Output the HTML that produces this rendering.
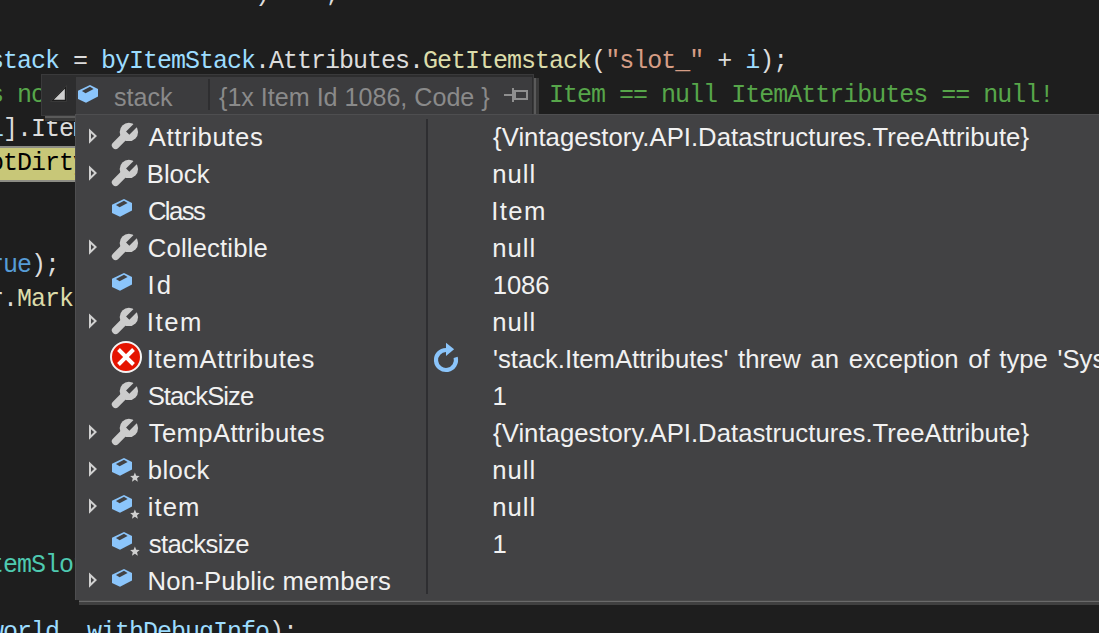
<!DOCTYPE html>
<html><head><meta charset="utf-8">
<style>
html,body{margin:0;padding:0;}
body{width:1099px;height:633px;overflow:hidden;position:relative;background:#1e1e1e;}
.code{position:absolute;left:-11px;height:34px;line-height:34px;font-family:"Liberation Mono",monospace;font-size:25px;letter-spacing:-1px;white-space:pre;color:#dcdcdc;}
.v{color:#9cdcfe}.m{color:#dcdcaa}.s{color:#d69d85}.k{color:#569cd6}.t{color:#4ec9b0}.c{color:#57a64a}
#hl{position:absolute;left:0;top:146px;width:75px;height:32px;background:#c8c778;border-top:2px solid #8c8c84;border-bottom:2px solid #8c8c84;}
#hdr{position:absolute;left:41px;top:74px;width:491px;height:40px;background:#2d2d2e;border:1px solid #3a3a3b;}
#hdrin{position:absolute;left:76px;top:77px;width:456px;height:37px;background:#3c3c3e;}
.ui{font-family:"Liberation Sans",sans-serif;font-size:25.7px;white-space:pre;}
#panel{position:absolute;left:75px;top:114px;width:1030px;height:485px;background:#424244;border-left:1px solid #4e4e50;border-top:1px solid #4e4e50;}
.row{position:absolute;left:0;height:37px;width:1030px;}
.row .nm{position:absolute;left:73px;top:1px;line-height:37px;color:#f1f1f1;}
.row .vl{position:absolute;left:417px;top:1px;line-height:37px;color:#f1f1f1;}
.row svg{position:absolute;}
</style></head>
<body>
<!-- code -->
<div class="code" style="top:-22px">                   )    ;</div>
<div class="code" style="top:45px"><span class="v">stack</span> = <span class="v">byItemStack</span>.Attributes.<span class="m">GetItemstack</span>(<span class="s">"slot_"</span> + <span class="v">i</span>);</div>
<div class="code c" style="top:79px">s not                                   Item == null ItemAttributes == null!</div>
<div class="code" style="top:113px"><span class="v">i</span>].Item</div>
<div id="hl"></div>
<div class="code" style="top:147px;color:#000">otDirty</div>
<div class="code" style="top:249px"><span class="k">rue</span>);</div>
<div class="code" style="top:283px">r.<span class="m">Mark</span></div>
<div class="code t" style="top:549px">temSlot</div>
<div class="code" style="top:616px"><span class="v">world</span>, <span class="v">withDebugInfo</span>);</div>

<!-- header -->
<div id="hdr"></div>
<div style="position:absolute;left:45px;top:116px;width:30px;height:2px;background:#5a5a5a"></div>
<div style="position:absolute;left:45px;top:118px;width:30px;height:3px;background:#3a3a3a"></div>
<div style="position:absolute;left:534px;top:78px;width:2px;height:36px;background:#5a5a5a"></div>
<div style="position:absolute;left:536px;top:78px;width:3px;height:36px;background:#3a3a3a"></div>
<svg style="position:absolute;left:48px;top:84px" width="20" height="20" viewBox="0 0 20 20">
  <polygon points="2.3,17.5 18.5,1.3 18.5,17.5" fill="#1e1e1e" stroke="#383838" stroke-width="1"/>
  <polygon points="5.8,15.8 16.8,4.8 16.8,15.8" fill="#cfcfcf"/>
</svg>
<div id="hdrin"></div>
<svg style="position:absolute;left:78px;top:85px" width="21" height="19" viewBox="0 0 21 19">
  <polygon points="12,0 20,4 20,11.6 8,17.8 0,14 0,5.7" fill="#8bc5fb"/>
  <polygon points="3.9,5.9 12,1.7 15.6,4.0 7.6,8.2" fill="#3c3c3e"/>
</svg>
<div class="ui" style="position:absolute;left:114px;top:79px;line-height:37px;font-size:25.1px;color:#8a8a8a">stack</div>
<div style="position:absolute;left:208px;top:79px;width:2px;height:31px;background:#2e2e30"></div>
<div class="ui" style="position:absolute;left:219px;top:79px;line-height:37px;font-size:25.1px;color:#8a8a8a">{1x Item Id 1086, Code }</div>
<svg style="position:absolute;left:503px;top:87px" width="27" height="16" viewBox="0 0 27 16">
  <rect x="1" y="7" width="9" height="2" fill="#8f8f8f"/>
  <rect x="9" y="1" width="2" height="14" fill="#8f8f8f"/>
  <rect x="12" y="4" width="12" height="8" fill="none" stroke="#8f8f8f" stroke-width="2"/>
</svg>

<!-- panel -->
<div id="panel">
  <div style="position:absolute;left:350px;top:4px;width:2px;height:475px;background:#2e2e31"></div>
</div>
<div style="position:absolute;left:79px;top:600px;width:1020px;height:1px;background:#4a4a4a"></div>
<div style="position:absolute;left:79px;top:601px;width:1020px;height:1px;background:#6a6a6a"></div>
<div style="position:absolute;left:79px;top:602px;width:1020px;height:3px;background:#404040"></div>

<div id="rows" style="position:absolute;left:76px;top:118px;">
<div class="row" style="top:0px"><svg style="left:12px;top:9px" width="12" height="19" viewBox="0 0 12 19"><path d="M1,1.5 L9,9.1 L1,16.7 Z M3,6.16 L3,12.04 L6.1,9.1 Z" fill="#d0d0d0" fill-rule="evenodd"/></svg><svg style="left:35px;top:4px" width="28" height="28" viewBox="0 0 28 28"><defs><mask id="wm0" maskUnits="userSpaceOnUse" x="0" y="0" width="28" height="28"><rect width="28" height="28" fill="#fff"/><line x1="16.7" y1="11.1" x2="30" y2="-2.2" stroke="#000" stroke-width="4.6"/></mask></defs><g mask="url(#wm0)" fill="#cccccc"><circle cx="17.9" cy="9.9" r="9.2"/><line x1="17.9" y1="9.9" x2="4.6" y2="23.3" stroke="#cccccc" stroke-width="7.5" stroke-linecap="round"/></g></svg><div class="ui nm" style="left:72.80px;letter-spacing:0.61px">Attributes</div><div class="ui vl" style="left:417.10px;letter-spacing:0.02px">{Vintagestory.API.Datastructures.TreeAttribute}</div></div>
<div class="row" style="top:37px"><svg style="left:12px;top:9px" width="12" height="19" viewBox="0 0 12 19"><path d="M1,1.5 L9,9.1 L1,16.7 Z M3,6.16 L3,12.04 L6.1,9.1 Z" fill="#d0d0d0" fill-rule="evenodd"/></svg><svg style="left:35px;top:4px" width="28" height="28" viewBox="0 0 28 28"><defs><mask id="wm1" maskUnits="userSpaceOnUse" x="0" y="0" width="28" height="28"><rect width="28" height="28" fill="#fff"/><line x1="16.7" y1="11.1" x2="30" y2="-2.2" stroke="#000" stroke-width="4.6"/></mask></defs><g mask="url(#wm1)" fill="#cccccc"><circle cx="17.9" cy="9.9" r="9.2"/><line x1="17.9" y1="9.9" x2="4.6" y2="23.3" stroke="#cccccc" stroke-width="7.5" stroke-linecap="round"/></g></svg><div class="ui nm" style="left:70.80px;letter-spacing:-0.03px">Block</div><div class="ui vl" style="left:416.20px;letter-spacing:1.00px">null</div></div>
<div class="row" style="top:74px"><svg style="left:36px;top:7px" width="21" height="19" viewBox="0 0 21 19"><polygon points="12,0 20,4 20,11.6 8,17.8 0,14 0,5.7" fill="#8bc5fb"/><polygon points="3.9,5.9 12,1.7 15.6,4.0 7.6,8.2" fill="#424244"/></svg><div class="ui nm" style="left:71.90px;letter-spacing:-1.60px">Class</div><div class="ui vl" style="left:415.20px;letter-spacing:1.43px">Item</div></div>
<div class="row" style="top:111px"><svg style="left:12px;top:9px" width="12" height="19" viewBox="0 0 12 19"><path d="M1,1.5 L9,9.1 L1,16.7 Z M3,6.16 L3,12.04 L6.1,9.1 Z" fill="#d0d0d0" fill-rule="evenodd"/></svg><svg style="left:35px;top:4px" width="28" height="28" viewBox="0 0 28 28"><defs><mask id="wm3" maskUnits="userSpaceOnUse" x="0" y="0" width="28" height="28"><rect width="28" height="28" fill="#fff"/><line x1="16.7" y1="11.1" x2="30" y2="-2.2" stroke="#000" stroke-width="4.6"/></mask></defs><g mask="url(#wm3)" fill="#cccccc"><circle cx="17.9" cy="9.9" r="9.2"/><line x1="17.9" y1="9.9" x2="4.6" y2="23.3" stroke="#cccccc" stroke-width="7.5" stroke-linecap="round"/></g></svg><div class="ui nm" style="left:71.80px;letter-spacing:0.15px">Collectible</div><div class="ui vl" style="left:416.20px;letter-spacing:1.00px">null</div></div>
<div class="row" style="top:148px"><svg style="left:36px;top:7px" width="21" height="19" viewBox="0 0 21 19"><polygon points="12,0 20,4 20,11.6 8,17.8 0,14 0,5.7" fill="#8bc5fb"/><polygon points="3.9,5.9 12,1.7 15.6,4.0 7.6,8.2" fill="#424244"/></svg><div class="ui nm" style="left:71.40px;letter-spacing:2.30px">Id</div><div class="ui vl" style="left:416.80px;letter-spacing:-0.17px">1086</div></div>
<div class="row" style="top:185px"><svg style="left:12px;top:9px" width="12" height="19" viewBox="0 0 12 19"><path d="M1,1.5 L9,9.1 L1,16.7 Z M3,6.16 L3,12.04 L6.1,9.1 Z" fill="#d0d0d0" fill-rule="evenodd"/></svg><svg style="left:35px;top:4px" width="28" height="28" viewBox="0 0 28 28"><defs><mask id="wm5" maskUnits="userSpaceOnUse" x="0" y="0" width="28" height="28"><rect width="28" height="28" fill="#fff"/><line x1="16.7" y1="11.1" x2="30" y2="-2.2" stroke="#000" stroke-width="4.6"/></mask></defs><g mask="url(#wm5)" fill="#cccccc"><circle cx="17.9" cy="9.9" r="9.2"/><line x1="17.9" y1="9.9" x2="4.6" y2="23.3" stroke="#cccccc" stroke-width="7.5" stroke-linecap="round"/></g></svg><div class="ui nm" style="left:70.80px;letter-spacing:1.53px">Item</div><div class="ui vl" style="left:416.20px;letter-spacing:1.00px">null</div></div>
<div class="row" style="top:222px"><svg style="left:33px;top:0px" width="34" height="34" viewBox="0 0 34 34"><circle cx="17" cy="17" r="15" fill="#e51400" stroke="#f4f4f4" stroke-width="2"/><line x1="9.5" y1="9.5" x2="24.5" y2="24.5" stroke="#fff" stroke-width="3.9"/><line x1="24.5" y1="9.5" x2="9.5" y2="24.5" stroke="#fff" stroke-width="3.9"/></svg><div class="ui nm" style="left:70.70px;letter-spacing:0.71px">ItemAttributes</div><div class="ui vl" style="word-spacing:2.5px">'stack.ItemAttributes' threw an exception of type 'System.NullReferenceException'</div></div>
<div class="row" style="top:259px"><svg style="left:35px;top:4px" width="28" height="28" viewBox="0 0 28 28"><defs><mask id="wm7" maskUnits="userSpaceOnUse" x="0" y="0" width="28" height="28"><rect width="28" height="28" fill="#fff"/><line x1="16.7" y1="11.1" x2="30" y2="-2.2" stroke="#000" stroke-width="4.6"/></mask></defs><g mask="url(#wm7)" fill="#cccccc"><circle cx="17.9" cy="9.9" r="9.2"/><line x1="17.9" y1="9.9" x2="4.6" y2="23.3" stroke="#cccccc" stroke-width="7.5" stroke-linecap="round"/></g></svg><div class="ui nm" style="left:71.70px;letter-spacing:-0.96px">StackSize</div><div class="ui vl" style="left:416.60px;letter-spacing:-1.10px">1</div></div>
<div class="row" style="top:296px"><svg style="left:12px;top:9px" width="12" height="19" viewBox="0 0 12 19"><path d="M1,1.5 L9,9.1 L1,16.7 Z M3,6.16 L3,12.04 L6.1,9.1 Z" fill="#d0d0d0" fill-rule="evenodd"/></svg><svg style="left:35px;top:4px" width="28" height="28" viewBox="0 0 28 28"><defs><mask id="wm8" maskUnits="userSpaceOnUse" x="0" y="0" width="28" height="28"><rect width="28" height="28" fill="#fff"/><line x1="16.7" y1="11.1" x2="30" y2="-2.2" stroke="#000" stroke-width="4.6"/></mask></defs><g mask="url(#wm8)" fill="#cccccc"><circle cx="17.9" cy="9.9" r="9.2"/><line x1="17.9" y1="9.9" x2="4.6" y2="23.3" stroke="#cccccc" stroke-width="7.5" stroke-linecap="round"/></g></svg><div class="ui nm" style="left:72.70px;letter-spacing:0.35px">TempAttributes</div><div class="ui vl" style="left:417.10px;letter-spacing:0.02px">{Vintagestory.API.Datastructures.TreeAttribute}</div></div>
<div class="row" style="top:333px"><svg style="left:12px;top:9px" width="12" height="19" viewBox="0 0 12 19"><path d="M1,1.5 L9,9.1 L1,16.7 Z M3,6.16 L3,12.04 L6.1,9.1 Z" fill="#d0d0d0" fill-rule="evenodd"/></svg><svg style="left:36px;top:7px" width="21" height="19" viewBox="0 0 21 19"><polygon points="12,0 20,4 20,11.6 8,17.8 0,14 0,5.7" fill="#8bc5fb"/><polygon points="3.9,5.9 12,1.7 15.6,4.0 7.6,8.2" fill="#424244"/></svg><svg style="left:52px;top:20px" width="14" height="14" viewBox="0 0 14 14"><polygon points="6.90,1.60 8.22,4.78 11.66,5.05 9.04,7.30 9.84,10.65 6.90,8.85 3.96,10.65 4.76,7.30 2.14,5.05 5.58,4.78" fill="#d0d0d0"/></svg><div class="ui nm" style="left:71.70px;letter-spacing:0.45px">block</div><div class="ui vl" style="left:416.20px;letter-spacing:1.00px">null</div></div>
<div class="row" style="top:370px"><svg style="left:12px;top:9px" width="12" height="19" viewBox="0 0 12 19"><path d="M1,1.5 L9,9.1 L1,16.7 Z M3,6.16 L3,12.04 L6.1,9.1 Z" fill="#d0d0d0" fill-rule="evenodd"/></svg><svg style="left:36px;top:7px" width="21" height="19" viewBox="0 0 21 19"><polygon points="12,0 20,4 20,11.6 8,17.8 0,14 0,5.7" fill="#8bc5fb"/><polygon points="3.9,5.9 12,1.7 15.6,4.0 7.6,8.2" fill="#424244"/></svg><svg style="left:52px;top:20px" width="14" height="14" viewBox="0 0 14 14"><polygon points="6.90,1.60 8.22,4.78 11.66,5.05 9.04,7.30 9.84,10.65 6.90,8.85 3.96,10.65 4.76,7.30 2.14,5.05 5.58,4.78" fill="#d0d0d0"/></svg><div class="ui nm" style="left:71.70px;letter-spacing:1.10px">item</div><div class="ui vl" style="left:416.20px;letter-spacing:1.00px">null</div></div>
<div class="row" style="top:407px"><svg style="left:36px;top:7px" width="21" height="19" viewBox="0 0 21 19"><polygon points="12,0 20,4 20,11.6 8,17.8 0,14 0,5.7" fill="#8bc5fb"/><polygon points="3.9,5.9 12,1.7 15.6,4.0 7.6,8.2" fill="#424244"/></svg><svg style="left:52px;top:20px" width="14" height="14" viewBox="0 0 14 14"><polygon points="6.90,1.60 8.22,4.78 11.66,5.05 9.04,7.30 9.84,10.65 6.90,8.85 3.96,10.65 4.76,7.30 2.14,5.05 5.58,4.78" fill="#d0d0d0"/></svg><div class="ui nm" style="left:72.70px;letter-spacing:-0.61px">stacksize</div><div class="ui vl" style="left:416.60px;letter-spacing:-1.10px">1</div></div>
<div class="row" style="top:444px"><svg style="left:12px;top:9px" width="12" height="19" viewBox="0 0 12 19"><path d="M1,1.5 L9,9.1 L1,16.7 Z M3,6.16 L3,12.04 L6.1,9.1 Z" fill="#d0d0d0" fill-rule="evenodd"/></svg><svg style="left:36px;top:7px" width="21" height="19" viewBox="0 0 21 19"><polygon points="12,0 20,4 20,11.6 8,17.8 0,14 0,5.7" fill="#8bc5fb"/><polygon points="3.9,5.9 12,1.7 15.6,4.0 7.6,8.2" fill="#424244"/></svg><div class="ui nm" style="left:71.50px;letter-spacing:0.20px;word-spacing:0px">Non-Public members</div></div>
</div>
<svg style="position:absolute;left:430px;top:340px" width="32" height="34" viewBox="0 0 32 34">
  <path d="M16 10 A10 10 0 1 0 25.66 17.41" fill="none" stroke="#8bc5fb" stroke-width="4.2"/>
  <polygon points="16,2.7 24.1,9.3 16,15.9" fill="#8bc5fb"/>
</svg>
</body></html>
